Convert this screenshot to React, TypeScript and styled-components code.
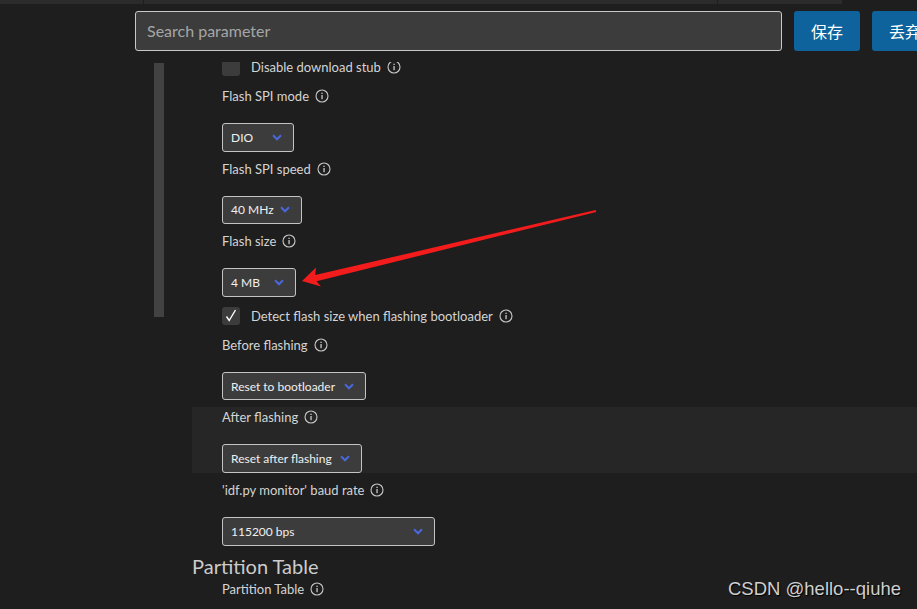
import styled, { createGlobalStyle } from "styled-components";

const GlobalStyle = createGlobalStyle`
  html, body {
    margin: 0;
    padding: 0;
    background: #1e1e1e;
  }
  * {
    box-sizing: border-box;
  }
`;

const Page = styled.div`
  position: relative;
  width: 917px;
  height: 609px;
  overflow: hidden;
  background: #1e1e1e;
  font-family: "Segoe UI", Lato, "Noto Sans", sans-serif;
  color: #cccccc;
`;

const TopStrip = styled.div`
  display: flex;
  gap: 1px;
  width: 842px;
  height: 4px;
`;

const StripCell = styled.div<{ $w?: number }>`
  flex: ${(p) => (p.$w ? `0 0 ${p.$w}px` : "1")};
  background: #2b2b2b;
`;

const Header = styled.div`
  display: flex;
  gap: 12px;
  padding: 7px 0 0 135px;
`;

const SearchBox = styled.input`
  flex: 0 0 647px;
  height: 40px;
  padding: 0 11px 2px;
  border: 1px solid #c8c8c8;
  border-radius: 3px;
  background: #3c3c3c;
  color: #cccccc;
  font-family: "Segoe UI", Lato, "Noto Sans", sans-serif;
  font-size: 16px;
  outline: none;

  &::placeholder {
    color: #a6a6a6;
  }
`;

const ActionButton = styled.button`
  flex: 0 0 66px;
  height: 40px;
  border: none;
  border-radius: 3px;
  background: #0e639c;
  color: #ffffff;
  font-family: "Noto Sans CJK SC", sans-serif;
  font-size: 16px;
`;

const Body = styled.div`
  display: flex;
  margin-top: 11px;
  padding-left: 154px;
`;

const Rail = styled.div`
  flex: 0 0 10px;
  height: 254px;
  margin-top: 1px;
  background: #424242;
`;

const Viewport = styled.div`
  flex: 1;
  height: 547px;
  margin-left: 28px;
  overflow: hidden;
`;

const Scroller = styled.div`
  display: flex;
  flex-direction: column;
  gap: 7px;
  margin-top: -7px;
`;

const Section = styled.section`
  display: flex;
  flex-direction: column;
`;

const SectionTitle = styled.h2`
  margin: 0;
  height: 26px;
  line-height: 26px;
  font-size: 20px;
  font-weight: 400;
  color: #cccccc;
`;

const Items = styled.div`
  display: flex;
  flex-direction: column;
  gap: 7px;
`;

const Setting = styled.div<{ $hover?: boolean }>`
  display: flex;
  flex-direction: column;
  align-items: flex-start;
  padding-left: 30px;
  background: ${(p) => (p.$hover ? "#262626" : "transparent")};
`;

const Label = styled.div`
  display: flex;
  align-items: center;
  gap: 6px;
  height: 20px;
  font-size: 13px;
  color: #d4d4d4;
  white-space: nowrap;
`;

const CheckRow = styled.div`
  display: flex;
  align-items: center;
  gap: 11px;
  height: 24px;
`;

const CheckBox = styled.div`
  display: flex;
  align-items: center;
  justify-content: center;
  width: 18px;
  height: 18px;
  border-radius: 3px;
  background: #3c3c3c;
`;

const Select = styled.div<{ $w: number }>`
  display: flex;
  align-items: center;
  justify-content: space-between;
  width: ${(p) => p.$w}px;
  height: 28.6px;
  margin-top: 17px;
  padding: 0 11px 0 8px;
  border: 1px solid #c4c4c4;
  border-radius: 3px;
  background: #3c3c3c;
  font-size: 12px;
  color: #f0f0f0;
  white-space: nowrap;
`;

const Watermark = styled.div`
  position: absolute;
  right: 16px;
  bottom: 9px;
  font-family: "Liberation Sans", Arial, sans-serif;
  font-size: 18.5px;
  color: #cfcfcf;
  text-shadow: 1px 1px 1px #000000;
`;

const Overlay = styled.svg`
  position: absolute;
  left: 0;
  top: 0;
  pointer-events: none;
`;

function InfoIcon() {
  return (
    <svg width="14" height="14" viewBox="0 0 14 14">
      <circle cx="7" cy="7" r="6" fill="none" stroke="#c8c8c8" strokeWidth="1.1" />
      <rect x="6.4" y="6" width="1.3" height="4.2" fill="#c8c8c8" />
      <rect x="6.4" y="3.7" width="1.3" height="1.3" fill="#c8c8c8" />
    </svg>
  );
}

function Chevron() {
  return (
    <svg width="10" height="7" viewBox="0 0 10 7">
      <path d="M1 1.3 L5 5.3 L9 1.3" fill="none" stroke="#4a68dc" strokeWidth="2" />
    </svg>
  );
}

function Check() {
  return (
    <svg width="12" height="13" viewBox="0 0 12 13">
      <path d="M1.5 7.5 L4.2 11.5 L10.5 1" fill="none" stroke="#ffffff" strokeWidth="1.4" />
    </svg>
  );
}

type Item =
  | { kind: "check"; label: string; checked: boolean }
  | { kind: "select"; label: string; value: string; width: number; hover?: boolean };

const flashItems: Item[] = [
  { kind: "check", label: "Disable download stub", checked: false },
  { kind: "select", label: "Flash SPI mode", value: "DIO", width: 72 },
  { kind: "select", label: "Flash SPI speed", value: "40 MHz", width: 80 },
  { kind: "select", label: "Flash size", value: "4 MB", width: 74 },
  { kind: "check", label: "Detect flash size when flashing bootloader", checked: true },
  { kind: "select", label: "Before flashing", value: "Reset to bootloader", width: 144 },
  { kind: "select", label: "After flashing", value: "Reset after flashing", width: 140, hover: true },
  { kind: "select", label: "'idf.py monitor' baud rate", value: "115200 bps", width: 213 },
];

function SettingItem({ item }: { item: Item }) {
  if (item.kind === "check") {
    return (
      <Setting>
        <CheckRow>
          <CheckBox>{item.checked ? <Check /> : null}</CheckBox>
          <Label>
            {item.label}
            <InfoIcon />
          </Label>
        </CheckRow>
      </Setting>
    );
  }
  return (
    <Setting $hover={item.hover}>
      <Label>
        {item.label}
        <InfoIcon />
      </Label>
      <Select $w={item.width}>
        <span>{item.value}</span>
        <Chevron />
      </Select>
    </Setting>
  );
}

export default function App() {
  return (
    <Page>
      <GlobalStyle />
      <TopStrip>
        <StripCell $w={143} />
        <StripCell $w={573} />
        <StripCell />
      </TopStrip>
      <Header>
        <SearchBox placeholder="Search parameter" />
        <ActionButton>保存</ActionButton>
        <ActionButton>丢弃</ActionButton>
      </Header>
      <Body>
        <Rail />
        <Viewport>
          <Scroller>
            <Section>
              <Items>
                {flashItems.map((item) => (
                  <SettingItem key={item.label} item={item} />
                ))}
              </Items>
            </Section>
            <Section>
              <SectionTitle>Partition Table</SectionTitle>
              <Items>
                <Setting>
                  <Label>
                    Partition Table
                    <InfoIcon />
                  </Label>
                </Setting>
              </Items>
            </Section>
          </Scroller>
        </Viewport>
      </Body>

      {/* red annotation arrow drawn over the screenshot */}
      <Overlay width="917" height="609" viewBox="0 0 917 609">
        <polygon
          points="302,281 321,286.5 316.5,281.2 596.3,212 595.7,210 315.2,275 316,267.5"
          fill="#f21c1c"
        />
      </Overlay>
      <Watermark>CSDN @hello--qiuhe</Watermark>
    </Page>
  );
}
